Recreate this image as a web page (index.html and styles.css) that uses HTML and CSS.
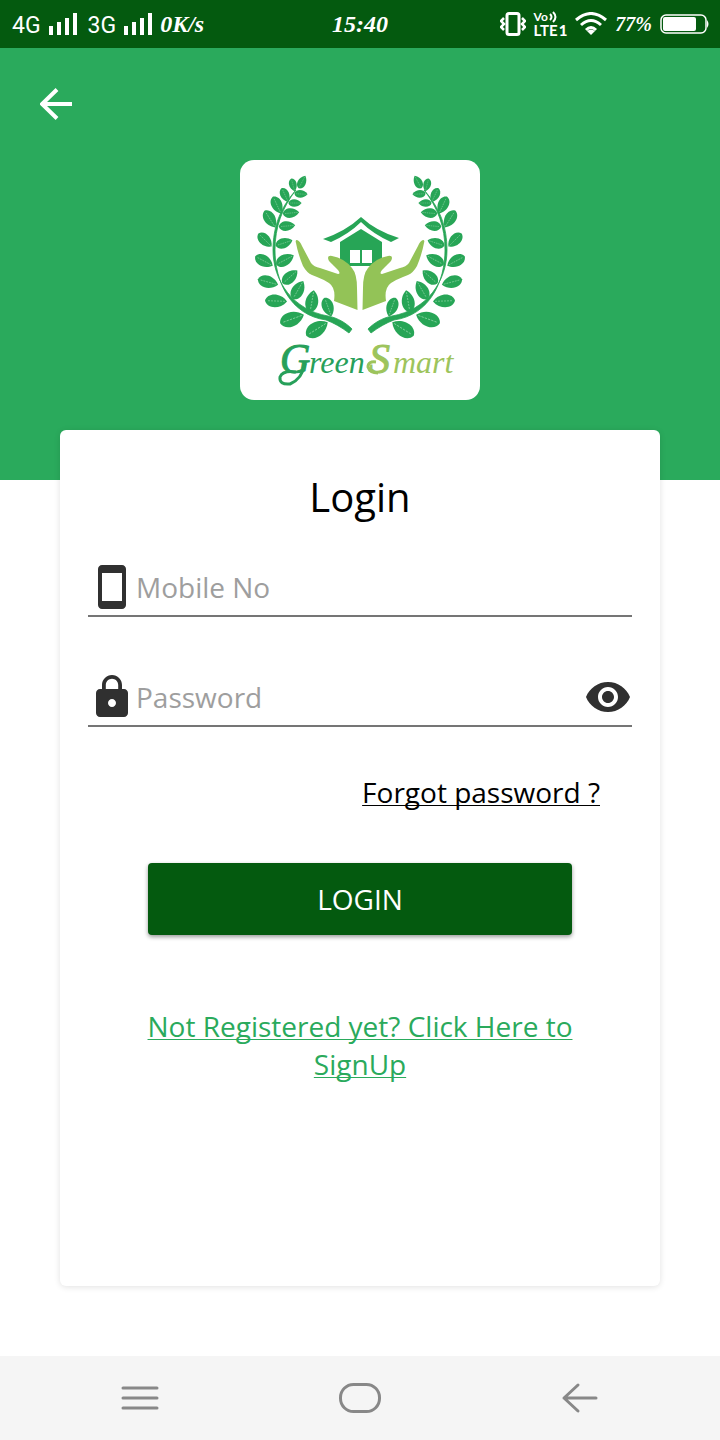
FILE: index.html
```html
<!DOCTYPE html>
<html lang="en">
<head>
  <meta charset="UTF-8">
  <meta name="viewport" content="width=device-width, initial-scale=1">
  <title>GreenSmart Login</title>
  <link rel="stylesheet" href="styles.css">
</head>
<body>
<div class="status-bar">
  <div class="status-left">
    <span class="network">4G</span>
    <svg class="signal" viewBox="0 0 28 22"><path d="M2 13v9M10 9v13M18 5v17M26 0v22"/></svg>
    <span class="network second">3G</span>
    <svg class="signal" viewBox="0 0 28 22"><path d="M2 13v9M10 9v13M18 5v17M26 0v22"/></svg>
    <span class="speed">0K/s</span>
  </div>
  <span class="clock">15:40</span>
  <div class="status-right">
    <svg class="vibrate" viewBox="0 0 26 24" fill="none" stroke="#fff"><rect x="7" y="1.5" width="12" height="21" rx="2" stroke-width="3"/><path d="M4 6L1 9l3 3-3 3 3 3M22 6l3 3-3 3 3 3-3 3" stroke-width="2.5"/></svg>
    <span class="volte">
      <span class="vo">Vo<svg viewBox="0 0 8 12"><path d="M1 3q3 3 0 6M4 1q5 5 0 10"/></svg></span>
      <span class="lte">LTE <b>1</b></span>
    </span>
    <svg class="wifi" viewBox="0 0 32 24"><path d="M1 8Q16-5 31 8M6 13Q16 4 26 13M11 18Q16 13 21 18" fill="none" stroke="#fff" stroke-width="3"/><path d="M12 19q4-3 8 0l-4 4z" fill="#fff"/></svg>
    <span class="percent">77%</span>
    <svg class="battery" viewBox="0 0 50 20"><rect x="1" y="1" width="45" height="18" rx="5" fill="none" stroke="#fff" stroke-width="1.5"/><rect x="3" y="3" width="33" height="14" rx="2" fill="#fff"/><path d="M47 6q3 4 0 8z" fill="#fff"/></svg>
  </div>
</div>

<header class="hero">
  <button class="back" type="button" aria-label="Back">
    <svg viewBox="0 0 32 32"><path d="M17 1.5L2 16l15 14.5M2 16h30"/></svg>
  </button>
  <div class="logo">
    <svg viewBox="0 0 240 240" role="img" aria-label="GreenSmart">
      <defs>
        <g id="leaf">
          <path d="M-11 0C-9-8 4-9 11 0C4 9-9 8-11 0z" fill="#27a556"/>
          <path d="M-8 0H9" stroke="#8bd3a3" stroke-width=".7" stroke-dasharray="2 1"/>
        </g>
        <g id="half">
          <!-- branch -->
          <path d="M56 30C40 48 33 67 33 90C33 121 53 150 88 156C98 158 106 163 112 169L109 173C101 167 94 163 86 160C50 155 35 121 35 90C35 67 42 48 56 30z" fill="#27a556" stroke="#27a556" stroke-width=".8"/>
          <use href="#leaf" transform="translate(53 25) rotate(75) scale(.6)"/>
          <use href="#leaf" transform="translate(62 22) rotate(-62) scale(.65)"/>
          <use href="#leaf" transform="translate(61 34) rotate(3) scale(.6)"/>
          <use href="#leaf" transform="translate(45 35) rotate(65) scale(.7)"/>
          <use href="#leaf" transform="translate(55 43) scale(.6)"/>
          <use href="#leaf" transform="translate(37 45) rotate(65) scale(.85)"/>
          <use href="#leaf" transform="translate(51 53) rotate(-5) scale(.75)"/>
          <use href="#leaf" transform="translate(30 59) rotate(58) scale(.9)"/>
          <use href="#leaf" transform="translate(47 66) rotate(-5) scale(.75)"/>
          <use href="#leaf" transform="translate(25 80) rotate(45) scale(.85)"/>
          <use href="#leaf" transform="translate(44 83) rotate(-18) scale(.8)"/>
          <use href="#leaf" transform="translate(24 101) rotate(28) scale(.9)"/>
          <use href="#leaf" transform="translate(45 100) rotate(-28) scale(.9)"/>
          <use href="#leaf" transform="translate(28 122) rotate(15) scale(.95)"/>
          <use href="#leaf" transform="translate(50 117) rotate(-42) scale(.9)"/>
          <use href="#leaf" transform="translate(36 141) rotate(2)"/>
          <use href="#leaf" transform="translate(58 130) rotate(-60) scale(.95)"/>
          <use href="#leaf" transform="translate(52 159) rotate(-20) scale(1.15)"/>
          <use href="#leaf" transform="translate(72 141) rotate(-80)"/>
          <use href="#leaf" transform="translate(77 169) rotate(-32) scale(1.15)"/>
          <use href="#leaf" transform="translate(88 147) rotate(70) scale(.9)"/>
        </g>
        <path id="hand" d="M57 80Q60 81 62 86L71 103Q74 107 80 108L98 114Q101 114 98 110L89 101Q86 95 92 96Q104 98 112 108Q117 114 117 128L117.5 150L94 141Q96 128 89 123Q85 120 72 115Q67 113 63 106Q58 94 56 83Q55 80 57 80z" fill="#93c357"/>
      </defs>
      <use href="#half"/>
      <use href="#half" transform="translate(240 0) scale(-1 1)"/>
      <!-- house -->
      <path d="M83 79Q106 71 121 57Q136 71 159 78L151 82Q133 74 121 62Q109 74 91 82z" fill="#27a556"/>
      <path d="M100 82L121 69L142 82V106H100z" fill="#27a556"/>
      <path d="M110 90h10v13h-10zM122 90h10v13h-10z" fill="#fff"/>
      <use href="#hand"/>
      <use href="#hand" transform="translate(240 0) scale(-1 1)"/>
      <text class="brand" y="213"><tspan class="cap" x="40">G</tspan><tspan x="69">reen</tspan><tspan class="cap light" x="129">S</tspan><tspan class="light" x="153">mart</tspan></text>
      <!-- swashes under the G and S -->
      <path d="M65 204Q62 219 50 224Q39 225 40 217Q43 210 56 212" fill="none" stroke="#27a05a" stroke-width="3"/>
      <path d="M136 202Q128 201 128 207Q130 213 138 213" fill="none" stroke="#9dc45c" stroke-width="3"/>
    </svg>
  </div>
</header>

<main class="card">
  <h1>Login</h1>
  <form>
    <div class="field">
      <label for="mobile" aria-label="Mobile No">
        <svg viewBox="0 0 24 24"><path d="M17 1H7c-1.1 0-2 .9-2 2v18c0 1.1.9 2 2 2h10c1.1 0 2-.9 2-2V3c0-1.1-.9-2-2-2zm0 18H7V5h10z"/></svg>
      </label>
      <input id="mobile" type="tel" placeholder="Mobile No">
    </div>
    <div class="field">
      <label for="password" aria-label="Password">
        <svg viewBox="0 0 24 24"><path fill-rule="evenodd" d="M18 8h-1V6c0-2.76-2.24-5-5-5S7 3.24 7 6v2H6c-1.1 0-2 .9-2 2v10c0 1.1.9 2 2 2h12c1.1 0 2-.9 2-2V10c0-1.1-.9-2-2-2zm-6 9c-1.1 0-2-.9-2-2s.9-2 2-2 2 .9 2 2-.9 2-2 2zM15.1 8H8.9V6c0-1.71 1.39-3.1 3.1-3.1s3.1 1.39 3.1 3.1z"/></svg>
      </label>
      <input id="password" type="password" placeholder="Password">
      <button class="eye" type="button" aria-label="Show password">
        <svg viewBox="0 0 24 24"><path d="M12 4.5C7 4.5 2.73 7.61 1 12c1.73 4.39 6 7.5 11 7.5s9.27-3.11 11-7.5c-1.73-4.39-6-7.5-11-7.5zM12 17c-2.76 0-5-2.24-5-5s2.24-5 5-5 5 2.24 5 5-2.24 5-5 5zm0-8c-1.66 0-3 1.34-3 3s1.34 3 3 3 3-1.34 3-3-1.34-3-3-3z"/></svg>
      </button>
    </div>
    <a class="forgot" href="#">Forgot password ?</a>
    <button class="login" type="submit">LOGIN</button>
    <a class="signup" href="#">Not Registered yet? Click Here to SignUp</a>
  </form>
</main>

<nav class="nav-bar">
  <button type="button" aria-label="Menu"><svg viewBox="0 0 44 32"><path d="M5 6h34M5 16h34M5 26h34"/></svg></button>
  <button type="button" aria-label="Home"><svg viewBox="0 0 44 32"><rect x="2.5" y="2.5" width="39" height="27" rx="13"/></svg></button>
  <button type="button" aria-label="Back"><svg viewBox="0 0 44 32"><path d="M20 3L6 16l14 13M6 16h32"/></svg></button>
</nav>
</body>
</html>
```
FILE: styles.css
```css
* { box-sizing: border-box; }
body { margin: 0; min-height: 100vh; display: flex; flex-direction: column; background: #fff; font-family: "Open Sans", sans-serif; font-size: 28px; line-height: 38px; }
svg { display: block; }
button { background: none; border: none; padding: 0; font: inherit; cursor: pointer; }

/* status bar */
.status-bar { height: 48px; padding: 0 12px; display: grid; grid-template-columns: 1fr auto 1fr; align-items: center; background: #045a0f; color: #fff; line-height: 24px; }
.status-left { display: flex; align-items: center; gap: 8px; }
.status-right { display: flex; align-items: center; justify-content: flex-end; gap: 8px; }
.network { font-family: Roboto, sans-serif; font-size: 23px; padding-top: 4px; }
.second { margin-left: 3px; }
.signal { width: 28px; height: 22px; stroke: #fff; stroke-width: 4; }
.speed, .clock, .percent { font-family: "Liberation Serif", serif; font-weight: bold; font-style: italic; font-size: 24px; }
.percent { font-size: 20px; }
.vibrate { width: 26px; height: 24px; }
.volte { font-family: Lato, sans-serif; font-weight: bold; font-size: 15px; line-height: 15px; }
.vo, .lte { display: flex; align-items: center; gap: 1px; }
.vo { font-size: 12px; line-height: 13px; }
.lte b { font-weight: 900; }
.vo svg { width: 8px; height: 12px; fill: none; stroke: #fff; stroke-width: 2; }
.wifi { width: 32px; height: 24px; }
.battery { width: 50px; height: 20px; margin-right: -2px; }

/* green header */
.hero { padding: 32px 32px 80px; background: #2aaa5c; }
.back { width: 48px; height: 48px; display: flex; align-items: center; justify-content: center; }
.back svg { width: 32px; height: 32px; fill: none; stroke: #fff; stroke-width: 4; }
.logo { width: 240px; margin: 32px auto 0; background: #fff; border-radius: 14px; }
.brand { font-family: "Liberation Serif", serif; font-style: italic; font-size: 32px; fill: #27a05a; }
.brand .cap { font-size: 42px; stroke: #27a05a; }
.brand .light { fill: #9dc45c; }
.brand .cap.light { stroke: #9dc45c; }

/* login card */
.card { flex: 1; margin: -50px 60px 70px; padding: 40px 28px; background: #fff; border-radius: 6px; box-shadow: 0 1px 6px rgba(0, 0, 0, 0.12); }
h1 { margin: 0 0 39px; font-size: 40px; font-weight: normal; line-height: 54px; text-align: center; color: #000; }
form { display: flex; flex-direction: column; }
.field { display: flex; padding-bottom: 4px; border-bottom: 2px solid #757575; margin-bottom: 56px; }
.field svg { width: 48px; height: 48px; fill: #303030; }
.field input { flex: 1; min-width: 0; padding: 0; border: none; outline: none; background: none; font: inherit; color: #000; }
.field input::placeholder { color: #9e9e9e; opacity: 1; }
.forgot, .signup { text-decoration-thickness: 1px; text-underline-offset: 2px; text-decoration-skip-ink: none; }
.forgot { align-self: flex-end; margin: -10px 32px 52px 0; color: #000; }
.login { height: 72px; margin: 0 60px 72px; background: #045a0f; color: #fff; border-radius: 4px; box-shadow: 0 2px 4px rgba(0, 0, 0, 0.4); }
.signup { margin: 0 48px; text-align: center; color: #2aaa5c; }

/* bottom navigation */
.nav-bar { height: 84px; padding: 0 30px; display: grid; grid-template-columns: repeat(3, 1fr); background: #f5f5f5; }
.nav-bar button { display: flex; align-items: center; justify-content: center; }
.nav-bar svg { width: 44px; height: 32px; fill: none; stroke: #888; stroke-width: 3; stroke-linecap: round; stroke-linejoin: round; }
```
